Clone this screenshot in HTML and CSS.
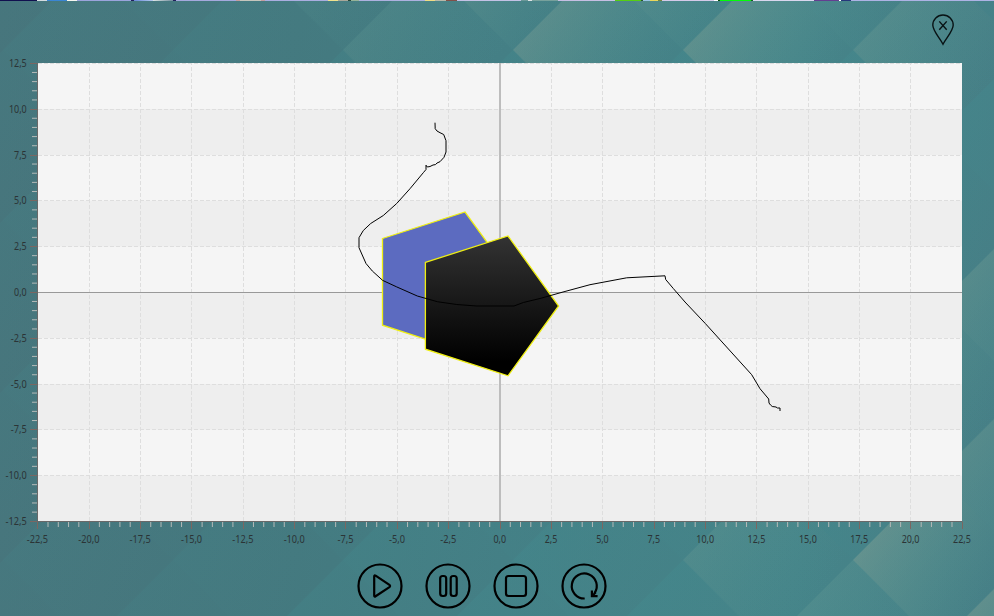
FILE: index.html
```html
<!DOCTYPE html>
<html lang="de">
<head>
<meta charset="utf-8">
<title>Simulation</title>
<link rel="stylesheet" href="styles.css">
</head>
<body>
<svg class="backdrop" viewBox="0 0 994 616" aria-hidden="true">
  <defs>
    <linearGradient id="base" x1="0" y1="0" x2="994" y2="0" gradientUnits="userSpaceOnUse">
      <stop offset="0" stop-color="#47757c"/>
      <stop offset="0.3" stop-color="#44797f"/>
      <stop offset="0.5" stop-color="#447f85"/>
      <stop offset="0.8" stop-color="#458489"/>
      <stop offset="1" stop-color="#467f86"/>
    </linearGradient>
    <linearGradient id="warm" x1="0.15" y1="0.3" x2="0.8" y2="0.75"><stop offset="0" stop-color="#98a593"/><stop offset="1" stop-color="#6ba296" stop-opacity="0"/></linearGradient>
    <linearGradient id="cool" x1="0.05" y1="0.3" x2="0.8" y2="0.75"><stop offset="0" stop-color="#42989a"/><stop offset="1" stop-color="#42989a" stop-opacity="0"/></linearGradient>
  </defs>
  <rect width="994" height="616" fill="url(#base)"/>
  <g id="tiles"></g>
</svg>
<main class="app">
  <div class="strip"></div>
  <header class="header">
    <svg class="pin" viewBox="0 0 24 32"><path d="M12 30.2C8.8 23.8 1.8 17 1.8 11A10.2 10 0 0 1 22.2 11C22.2 17 15.2 23.8 12 30.2ZM8.3 7.4l7.4 8.4M15.7 7.4l-7.4 8.4"/></svg>
  </header>
  <svg class="chart" viewBox="0 56 994 498">
    <defs>
      <linearGradient id="dark" x1="0" y1="0" x2="0" y2="1"><stop offset="0" stop-color="#333"/><stop offset="0.9" stop-color="#000"/></linearGradient>
    </defs>
    <rect x="38" y="63" width="924" height="458" fill="#f5f5f5"/>
    <g id="grid"></g>
    <path class="zero-x" d="M500 63V521"/>
    <path class="zero-y" d="M38 292.5H962"/>
    <path class="axis" d="M37.5 63V521.5H962.5"/>
    <g id="ticks"></g>
    <g id="labels"></g>
    <polygon class="shape" fill="#5c6bc0" points="382.5,238.5 465,212 516,282 465,352 382.5,325.2"/>
    <polygon class="shape" fill="url(#dark)" points="425.4,262.4 508,236 558.6,306 508,375.8 425.4,349.2"/>
    <polyline class="track" points="435,122.7 435.2,128.7 437,131 440,132.7 443.7,134.5 446,140.7 446,152 444,157.3 440,161.7 437,163 435.5,164.6 433,165 430,166.5 427.3,167 426,165.2 426,169.5 423.3,172.7 410,188.7 396.7,203.5 383.3,215.5 370.7,223.5 363.3,230.5 359,237.7 359,247.7 366,263.5 372.3,271 382.7,280.4 396.7,286.9 417.3,296 437.3,301.7 456.7,304.5 476.7,306 514,306 523.3,302.5 540,298.5 563,292 590,284.7 626.7,277.8 665,275.8 665.7,279.5 673.3,288.5 685,302 705.3,323.5 751.7,374.7 760,388.7 768.7,399 769,403 770.5,405 772.3,406.5 776,407 777.5,408 780,408 780,411"/>
  </svg>
  <nav class="controls">
    <button class="control" aria-label="Play"><svg viewBox="0 0 46 46"><circle cx="23" cy="23" r="21.5"/><path d="M17.2 13.4V32.6Q17.2 34.2 18.6 33.3L32.4 24.1Q33.8 23 32.4 21.9L18.6 12.7Q17.2 11.8 17.2 13.4Z"/></svg></button>
    <button class="control" aria-label="Pause"><svg viewBox="0 0 46 46"><circle cx="23" cy="23" r="21.5"/><rect x="15.2" y="13" width="6" height="20" rx="2.5"/><rect x="25.7" y="13" width="6" height="20" rx="2.5"/></svg></button>
    <button class="control" aria-label="Stop"><svg viewBox="0 0 46 46"><circle cx="23" cy="23" r="21.5"/><rect x="13" y="13" width="20" height="20" rx="2.5"/></svg></button>
    <button class="control" aria-label="Restart"><svg viewBox="0 0 46 46"><circle cx="23" cy="23" r="21.5"/><path d="M23.7 35.5A12.5 12.5 0 1 1 33.5 30.2M30.9 27.6V33.2H36.6M31.4 32.7L34.8 29.3"/></svg></button>
  </nav>
</main>
<script src="app.js"></script>
</body>
</html>
```
FILE: styles.css
```css
* { box-sizing: border-box; }
body {
  margin: 0;
  width: 994px;
  height: 616px;
  overflow: hidden;
  background: #447f85;
  font-family: "Noto Sans", sans-serif;
}
.backdrop {
  position: absolute;
  inset: 0;
  width: 994px;
  height: 616px;
  z-index: -1;
}
.app { display: flex; flex-direction: column; height: 616px; }
.strip {
  flex: none;
  height: 1px;
  background: linear-gradient(90deg,
    #11104f 0 37px, #d5dcdf 37px 47px, #3a86d4 47px 67px, #f6f7ef 67px 77px,
    #9ba4dc 77px 131px, #20205c 131px 134px, #6789d8 134px, #b4c9ef 153px,
    #dce5e5 153px, #718d9c 173px, #20205c 173px 176px, #a5a9dd 176px 236px,
    #c59d9e 236px 240px, #c5c6bd 240px 261px, #c59d9e 261px 265px, #aaaee0 265px 328px,
    #f0e28d 328px 338px, #a8a799 338px 348px, #294737 348px 351px, #95b398 351px 359px,
    #adb1df 359px 425px, #f0dc84 425px 435px, #b9b8a8 435px 446px, #815048 446px 457px,
    #c3c2e5 457px 521px, #6b9998 521px 528px, #dce3e6 528px 532px, #77a19c 532px 558px,
    #c6bfe3 558px 615px, #56cf12 615px 641px, #2b5631 641px 643px, #9bc4e4 643px 650px,
    #ead75b 650px 658px, #77863f 658px 662px, #d4cae9 662px 714px, #fff 714px 718px,
    #0b510b 718px 720px, #00ff08 720px 751px, #175c24 751px 753px, #d9d7ee 753px 814px,
    #633f91 814px 839px, #fff 839px 841px, #26377b 841px 851px, #adb3e4 851px);
}
.header {
  flex: none;
  height: 55px;
  display: flex;
  justify-content: flex-end;
  padding: 13px 39px 0 0;
}
.pin { width: 24px; height: 32px; fill: none; stroke: #081214; stroke-width: 1.4; }
.chart { flex: none; width: 994px; height: 498px; display: block; }
.band { fill: #eeeeee; }
.grid-line { stroke: #dedede; stroke-width: 1; stroke-dasharray: 4 2; }
.zero-x { stroke: #bdbdbd; stroke-width: 2; }
.zero-y { stroke: #999; stroke-width: 1; }
.axis { fill: none; stroke: #686868; stroke-width: 1; }
.major { stroke: #7b6661; stroke-width: 1; }
.minor { stroke: #b5bab8; stroke-width: 1; }
.label { font-size: 10px; fill: #2b3436; }
.shape { stroke: #eeee12; stroke-width: 1.3; }
.track { fill: none; stroke: #000; stroke-width: 1; }
.controls { display: flex; justify-content: center; gap: 22px; padding: 9px 30px 0 0; }
.control { width: 46px; height: 46px; padding: 0; border: 0; background: none; }
.control svg { display: block; width: 46px; height: 46px; fill: none; stroke: #000; stroke-width: 2.2; }
```
FILE: app.js
```js
const NS = "http://www.w3.org/2000/svg";
function add(parent, tag, attrs, text) {
  const node = document.createElementNS(NS, tag);
  for (const key in attrs) node.setAttribute(key, attrs[key]);
  if (text !== undefined) node.textContent = text;
  document.getElementById(parent).appendChild(node);
}
const xPos = v => 500 + v * 20.545;
const yPos = v => 292.3 - v * 18.32;

// Diamond mosaic: each tile fades from its upper-left edge to the lower right
for (let row = -1; row < 9; row++) {
  for (let col = -1; col < 7; col++) {
    const left = 3 + col * 170 - (row % 2 ? 85 : 0);
    const y = 50 + row * 85;
    let warm = 0, cool = 0.12;
    if (left > 240) {
      cool = 0.2;
      if (row <= 0) warm = [0.1, 0.28, 0.3, 0.18, 0][Math.min(4, Math.floor((left - 240) / 170))];
      if (left > 780 && row > 2) warm = row > 5 ? 0.36 : 0.22;
      if (left > 600 && left <= 780 && row > 5) warm = 0.14;
    }
    const points = `${left},${y} ${left + 85},${y - 85} ${left + 170},${y} ${left + 85},${y + 85}`;
    add("tiles", "polygon", { points, fill: "url(#cool)", opacity: cool });
    if (warm) add("tiles", "polygon", { points, fill: "url(#warm)", opacity: warm });
  }
}

const format = v => v.toFixed(1).replace(".", ",");
const labelWidth = text => text.replace(/[-,]/g, "").length * 5.2 + 2.2 + (text[0] === "-" ? 3.4 : 0);

for (let i = 0; i < 5; i++) {
  add("grid", "rect", { class: "band", x: 38, y: yPos(10 - i * 5), width: 924, height: 45.8 });
}
for (let v = -22.5; v <= 22.5; v += 2.5) {
  const x = Math.floor(xPos(v)) + 0.5;
  if (v !== 0 && Math.abs(v) < 22.5) add("grid", "path", { class: "grid-line", d: `M${x} 521V63` });
  add("ticks", "path", { class: "major", d: `M${x} 522V529` });
  const text = format(v);
  add("labels", "text", { class: "label", x: xPos(v) - 0.3, y: 543, "text-anchor": "middle", textLength: labelWidth(text), lengthAdjust: "spacingAndGlyphs" }, text);
}
for (let v = -12.5; v <= 12.5; v += 2.5) {
  const y = Math.floor(yPos(v) + 0.2) + 0.5;
  if (v !== 0 && v > -12.5) add("grid", "path", { class: "grid-line", d: `M38 ${y}H962` });
  add("ticks", "path", { class: "major", d: `M30 ${y}H37` });
  const text = format(v);
  add("labels", "text", { class: "label", x: 26.7, y: y + 3.8, "text-anchor": "end", textLength: labelWidth(text), lengthAdjust: "spacingAndGlyphs" }, text);
}
for (let i = -45; i <= 45; i++) {
  if (i % 5) add("ticks", "path", { class: "minor", d: `M${xPos(i / 2)} 522V527` });
}
for (let i = -25; i <= 25; i++) {
  if (i % 5) add("ticks", "path", { class: "minor", d: `M32 ${yPos(i / 2)}H37` });
}
```
